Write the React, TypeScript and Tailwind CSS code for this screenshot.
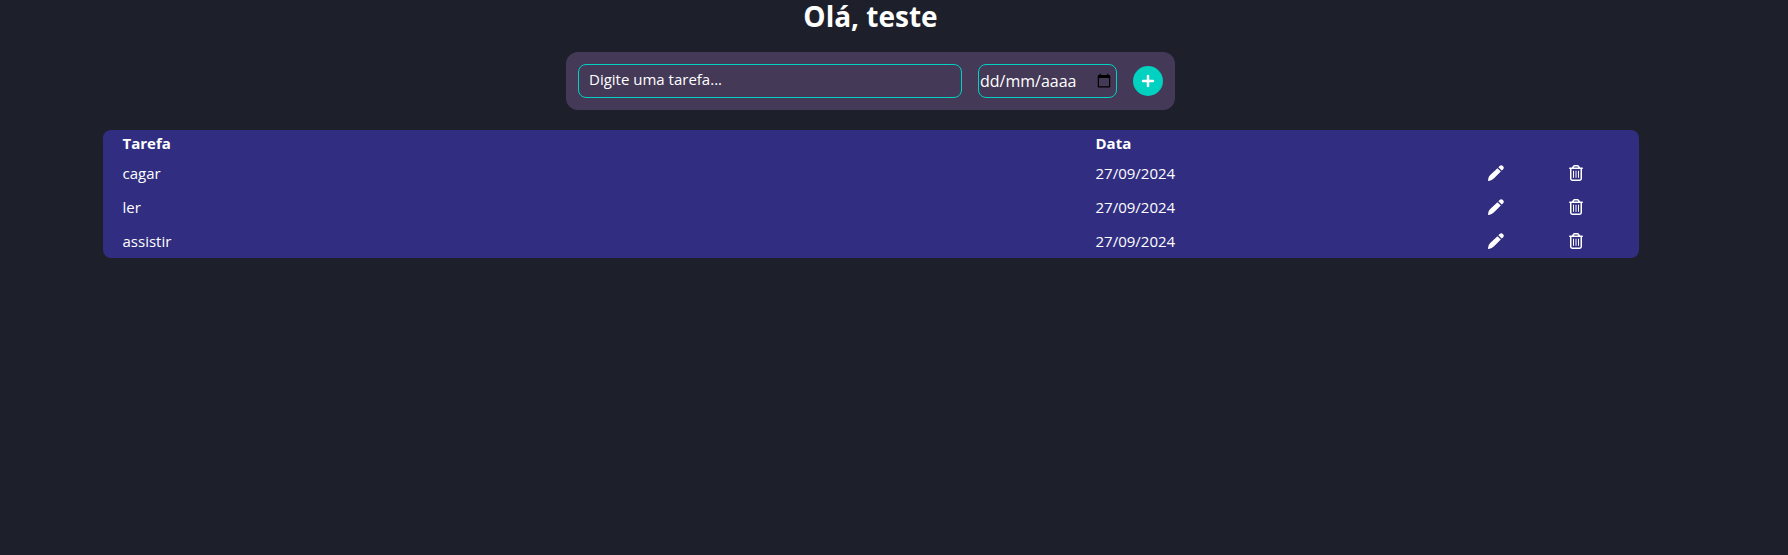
import { useState } from "react";
import type { FormEvent } from "react";
import { FaRegTrashCan } from "react-icons/fa6";

type Task = { id: number; name: string; date: string };

const initialTasks: Task[] = [
  { id: 1, name: "cagar", date: "27/09/2024" },
  { id: 2, name: "ler", date: "27/09/2024" },
  { id: 3, name: "assistir", date: "27/09/2024" },
];

function PencilIcon() {
  return (
    <svg viewBox="0 0 16 16" fill="currentColor" className="size-4" aria-hidden="true">
      <path d="M9.5 3.2 12.8 6.5 6.3 13Q3.9 15.3 .8 16Q0 16.1 0 15.3Q0 11.9 2.2 10Z" />
      <path d="M10.4 2.3 11.6 1.1Q13.1-.6 14.9 1.1Q16.7 2.9 15 4.4L13.7 5.6Z" />
    </svg>
  );
}

function PlusIcon() {
  return (
    <svg
      viewBox="0 0 16 16"
      fill="none"
      stroke="currentColor"
      strokeWidth="2.5"
      strokeLinecap="round"
      className="size-4"
      aria-hidden="true"
    >
      <path d="M8 3v10M3 8h10" />
    </svg>
  );
}

export default function App() {
  const [tasks, setTasks] = useState<Task[]>(initialTasks);
  const [name, setName] = useState("");
  const [date, setDate] = useState("");

  function addTask(event: FormEvent) {
    event.preventDefault();
    if (!name || !date) return;
    setTasks([
      ...tasks,
      { id: Date.now(), name, date: date.split("-").reverse().join("/") },
    ]);
    setName("");
    setDate("");
  }

  function editTask(task: Task) {
    setName(task.name);
    setDate(task.date.split("/").reverse().join("-"));
    setTasks(tasks.filter((item) => item.id !== task.id));
  }

  return (
    <div className="min-h-screen bg-[#1d1f2a] pr-[47px] font-['Open_Sans','Noto_Sans',sans-serif] text-[15px] leading-6 text-white">
      <main className="mx-auto flex max-w-[1536px] flex-col items-center">
        <h1 className="text-[28px] leading-8 font-bold">Olá, teste</h1>

        <form
          onSubmit={addTask}
          className="mt-5 flex items-center gap-4 rounded-xl bg-[#453958] p-3"
        >
          <input
            type="text"
            aria-label="Tarefa"
            placeholder="Digite uma tarefa..."
            value={name}
            onChange={(event) => setName(event.target.value)}
            className="h-[34px] w-96 rounded-lg border border-[#00d1c1] bg-transparent px-2.5 pb-1 outline-none placeholder:text-white"
          />
          <div className="relative flex">
            <input
              type="date"
              aria-label="Data"
              value={date}
              onChange={(event) => setDate(event.target.value)}
              className={
                date
                  ? "h-[34px] w-[139px] rounded-lg border border-[#00d1c1] bg-transparent px-0.5 text-base outline-none"
                  : "h-[34px] w-[139px] rounded-lg border border-[#00d1c1] bg-transparent px-0.5 text-base text-transparent outline-none"
              }
            />
            {!date && (
              <span className="pointer-events-none absolute inset-y-0 left-0.5 flex items-center text-base">
                dd/mm/aaaa
              </span>
            )}
          </div>
          <button
            type="submit"
            aria-label="Adicionar"
            className="flex size-[30px] items-center justify-center rounded-full bg-[#00d1c1]"
          >
            <PlusIcon />
          </button>
        </form>

        <div className="mt-5 w-full rounded-lg bg-[#312e81] pr-[23px]">
          <table className="w-full table-fixed text-left">
            <thead>
              <tr className="h-[26px]">
                <th className="pl-5 font-bold">Tarefa</th>
                <th className="w-[380px] pl-5 font-bold">Data</th>
                <td className="w-20" />
                <td className="w-20" />
              </tr>
            </thead>
            <tbody>
              {tasks.map((task) => (
                <tr key={task.id} className="h-[34px]">
                  <td className="pl-5">{task.name}</td>
                  <td className="pl-5">{task.date}</td>
                  <td>
                    <button
                      type="button"
                      aria-label="Editar"
                      onClick={() => editTask(task)}
                      className="mx-auto block"
                    >
                      <PencilIcon />
                    </button>
                  </td>
                  <td>
                    <button
                      type="button"
                      aria-label="Excluir"
                      onClick={() =>
                        setTasks(tasks.filter((item) => item.id !== task.id))
                      }
                      className="mx-auto block"
                    >
                      <FaRegTrashCan size={16} />
                    </button>
                  </td>
                </tr>
              ))}
            </tbody>
          </table>
        </div>
      </main>
    </div>
  );
}
